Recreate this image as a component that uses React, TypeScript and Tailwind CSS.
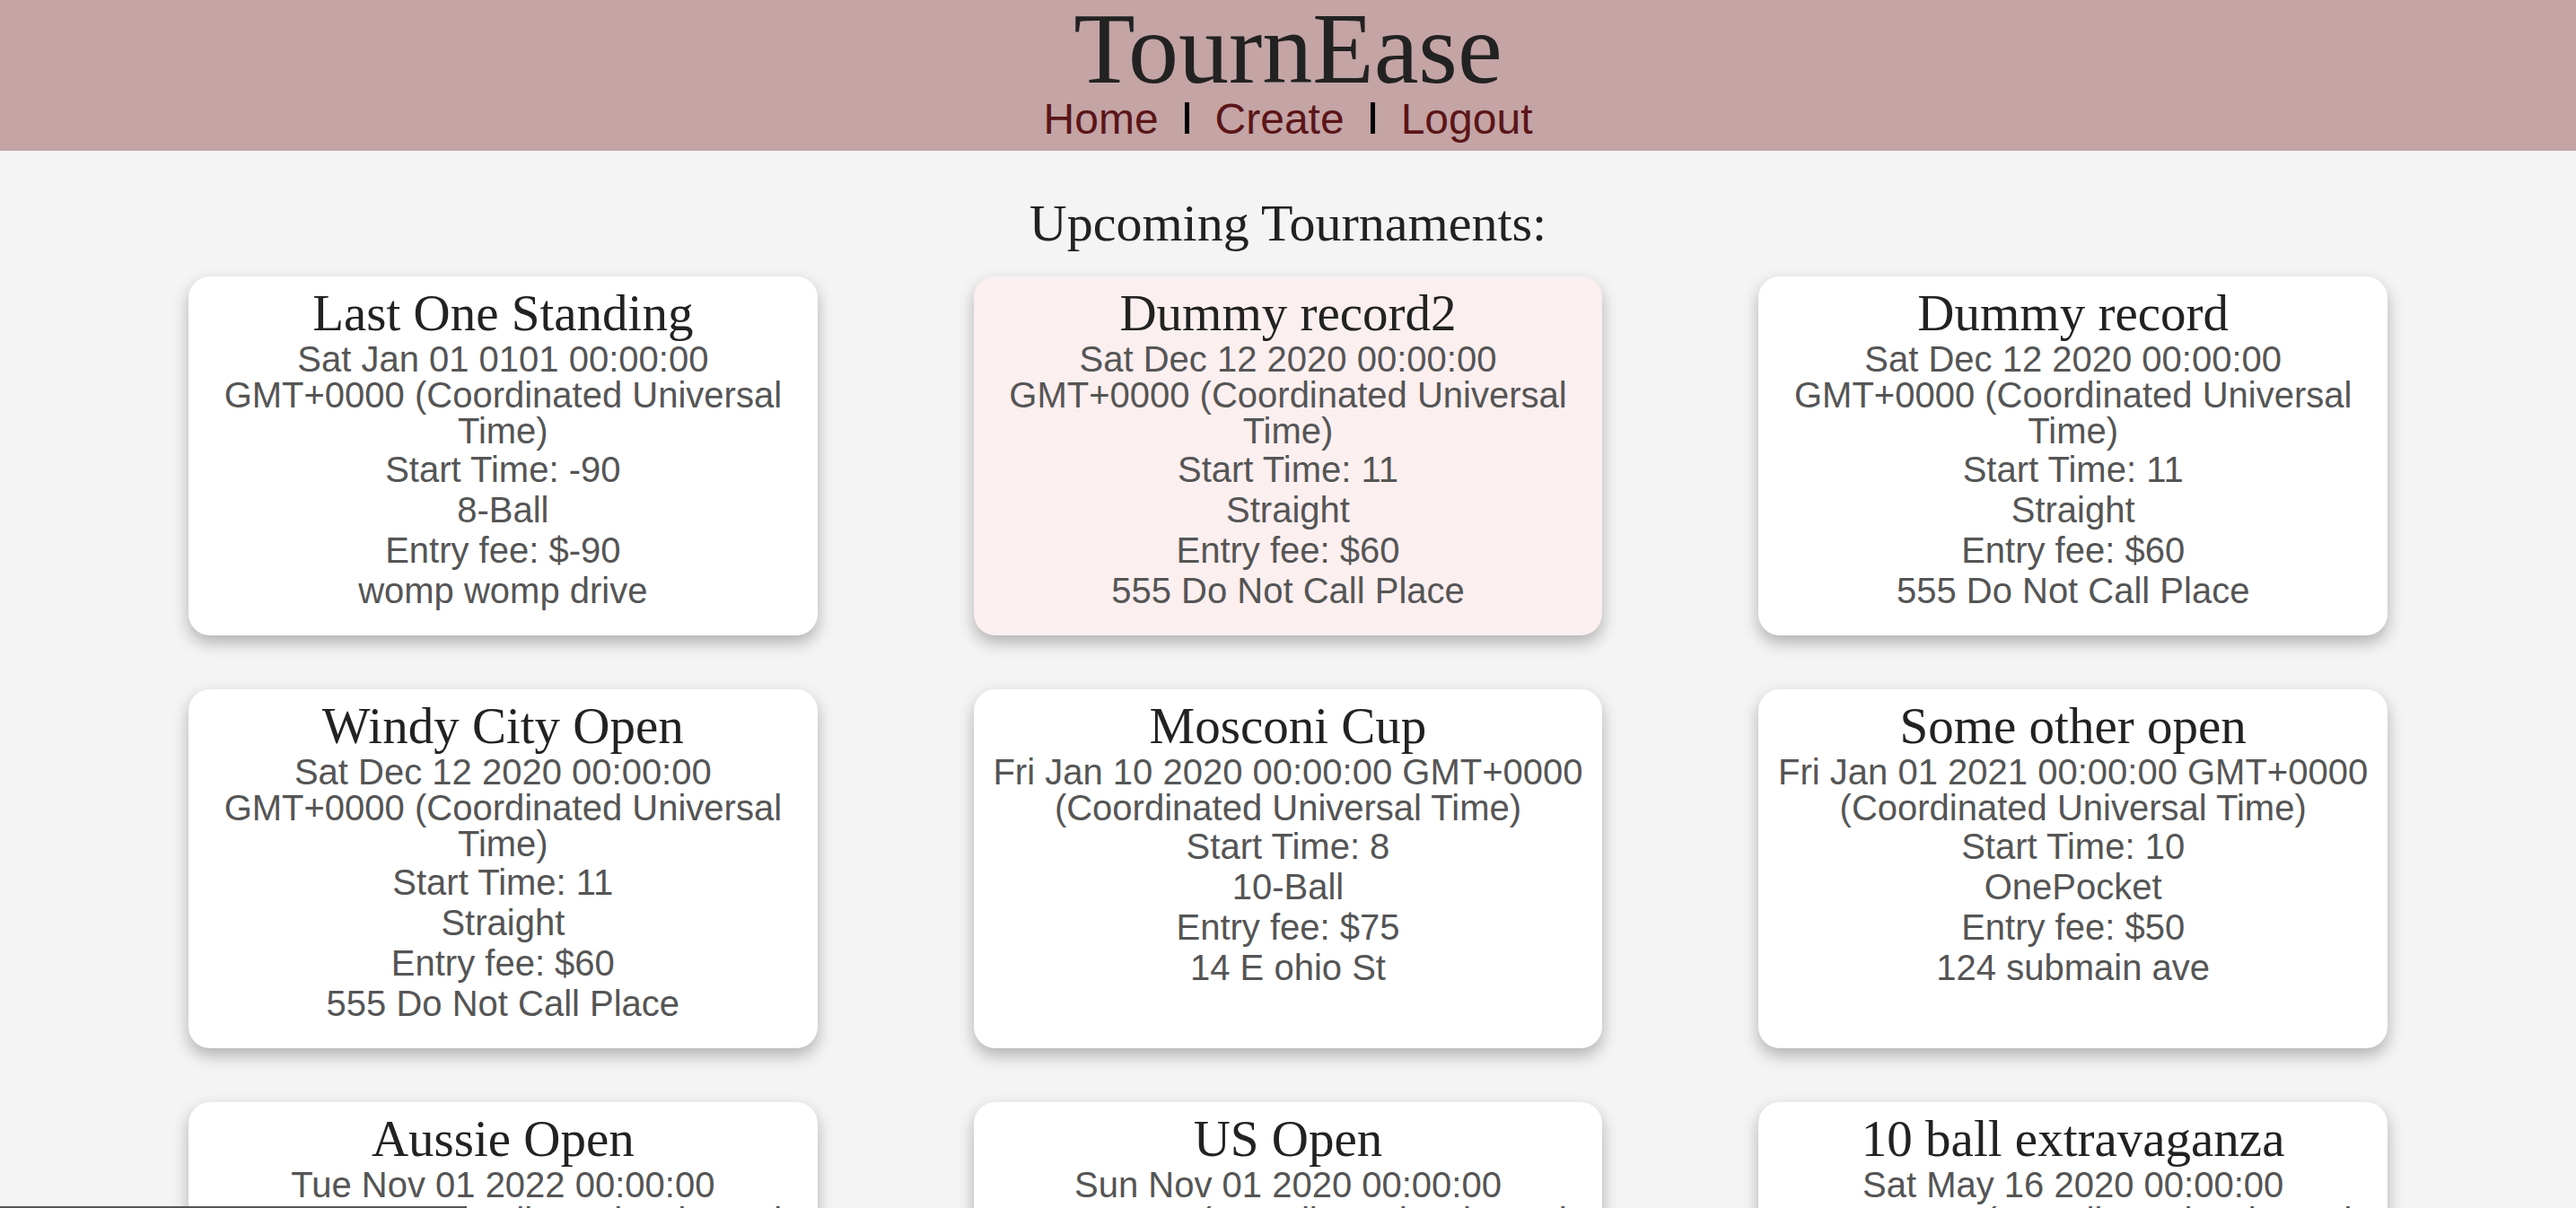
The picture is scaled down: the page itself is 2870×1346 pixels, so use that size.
type Tournament = {
  name: string;
  date: string;
  start: string;
  game: string;
  fee: string;
  address: string;
};

const tournaments: Tournament[] = [
  {
    name: "Last One Standing",
    date: "Sat Jan 01 0101 00:00:00 GMT+0000 (Coordinated Universal Time)",
    start: "-90",
    game: "8-Ball",
    fee: "-90",
    address: "womp womp drive",
  },
  {
    name: "Dummy record2",
    date: "Sat Dec 12 2020 00:00:00 GMT+0000 (Coordinated Universal Time)",
    start: "11",
    game: "Straight",
    fee: "60",
    address: "555 Do Not Call Place",
  },
  {
    name: "Dummy record",
    date: "Sat Dec 12 2020 00:00:00 GMT+0000 (Coordinated Universal Time)",
    start: "11",
    game: "Straight",
    fee: "60",
    address: "555 Do Not Call Place",
  },
  {
    name: "Windy City Open",
    date: "Sat Dec 12 2020 00:00:00 GMT+0000 (Coordinated Universal Time)",
    start: "11",
    game: "Straight",
    fee: "60",
    address: "555 Do Not Call Place",
  },
  {
    name: "Mosconi Cup",
    date: "Fri Jan 10 2020 00:00:00 GMT+0000 (Coordinated Universal Time)",
    start: "8",
    game: "10-Ball",
    fee: "75",
    address: "14 E ohio St",
  },
  {
    name: "Some other open",
    date: "Fri Jan 01 2021 00:00:00 GMT+0000 (Coordinated Universal Time)",
    start: "10",
    game: "OnePocket",
    fee: "50",
    address: "124 submain ave",
  },
  {
    name: "Aussie Open",
    date: "Tue Nov 01 2022 00:00:00 GMT+0000 (Coordinated Universal Time)",
    start: "9",
    game: "9-Ball",
    fee: "100",
    address: "1 Sydney Rd",
  },
  {
    name: "US Open",
    date: "Sun Nov 01 2020 00:00:00 GMT+0000 (Coordinated Universal Time)",
    start: "10",
    game: "9-Ball",
    fee: "200",
    address: "100 Main St",
  },
  {
    name: "10 ball extravaganza",
    date: "Sat May 16 2020 00:00:00 GMT+0000 (Coordinated Universal Time)",
    start: "12",
    game: "10-Ball",
    fee: "40",
    address: "22 Cue Ln",
  },
];

function Card({ t, highlight }: { t: Tournament; highlight?: boolean }) {
  return (
    <div
      className={`rounded-[24px] px-[18px] pt-[13px] pb-[27px] text-center shadow-[0_8px_18px_rgba(0,0,0,0.28)] ${
        highlight ? "bg-[#fcefef]" : "bg-white"
      }`}
    >
      <h3 className="font-['Liberation_Serif',serif] text-[57px] leading-[56px] text-[#222]">
        {t.name}
      </h3>
      <div className="mt-[3px] font-['Liberation_Sans',Arial,sans-serif] text-[40px] text-[#555]">
        <p className="leading-[40px]">{t.date}</p>
        <p className="mt-[1px] leading-[45px]">Start Time: {t.start}</p>
        <p className="leading-[45px]">{t.game}</p>
        <p className="leading-[45px]">Entry fee: ${t.fee}</p>
        <p className="leading-[45px]">{t.address}</p>
      </div>
    </div>
  );
}

export default function App() {
  return (
    <div className="min-h-screen bg-[#f4f4f4]">
      <header className="h-[168px] bg-[#c4a4a5] pt-[2px] text-center">
        <h1 className="font-['Liberation_Serif',serif] text-[112px] leading-[104px] text-[#222]">
          TournEase
        </h1>
        <nav className="mt-[3px] flex items-center justify-center font-['Liberation_Sans',Arial,sans-serif] text-[48px] leading-[48px] text-[#5b1518]">
          <a href="#">Home</a>
          <span aria-hidden className="mx-[29px] inline-block h-[35px] w-[5px] translate-y-[-2px] bg-black" />
          <a href="#">Create</a>
          <span aria-hidden className="mx-[29px] inline-block h-[35px] w-[5px] translate-y-[-2px] bg-black" />
          <a href="#">Logout</a>
        </nav>
      </header>

      <main className="pt-[53px] pb-20">
        <h2 className="mb-[31px] text-center font-['Liberation_Serif',serif] text-[58px] leading-[56px] text-[#222]">
          Upcoming Tournaments:
        </h2>
        <div className="mx-auto grid w-[2450px] grid-cols-3 gap-x-[174px] gap-y-[60px]">
          {tournaments.map((t, i) => (
            <Card key={t.name} t={t} highlight={i === 1} />
          ))}
        </div>
      </main>

      <div className="fixed bottom-0 left-0 h-[2px] w-[520px] bg-[#555]" />
    </div>
  );
}
